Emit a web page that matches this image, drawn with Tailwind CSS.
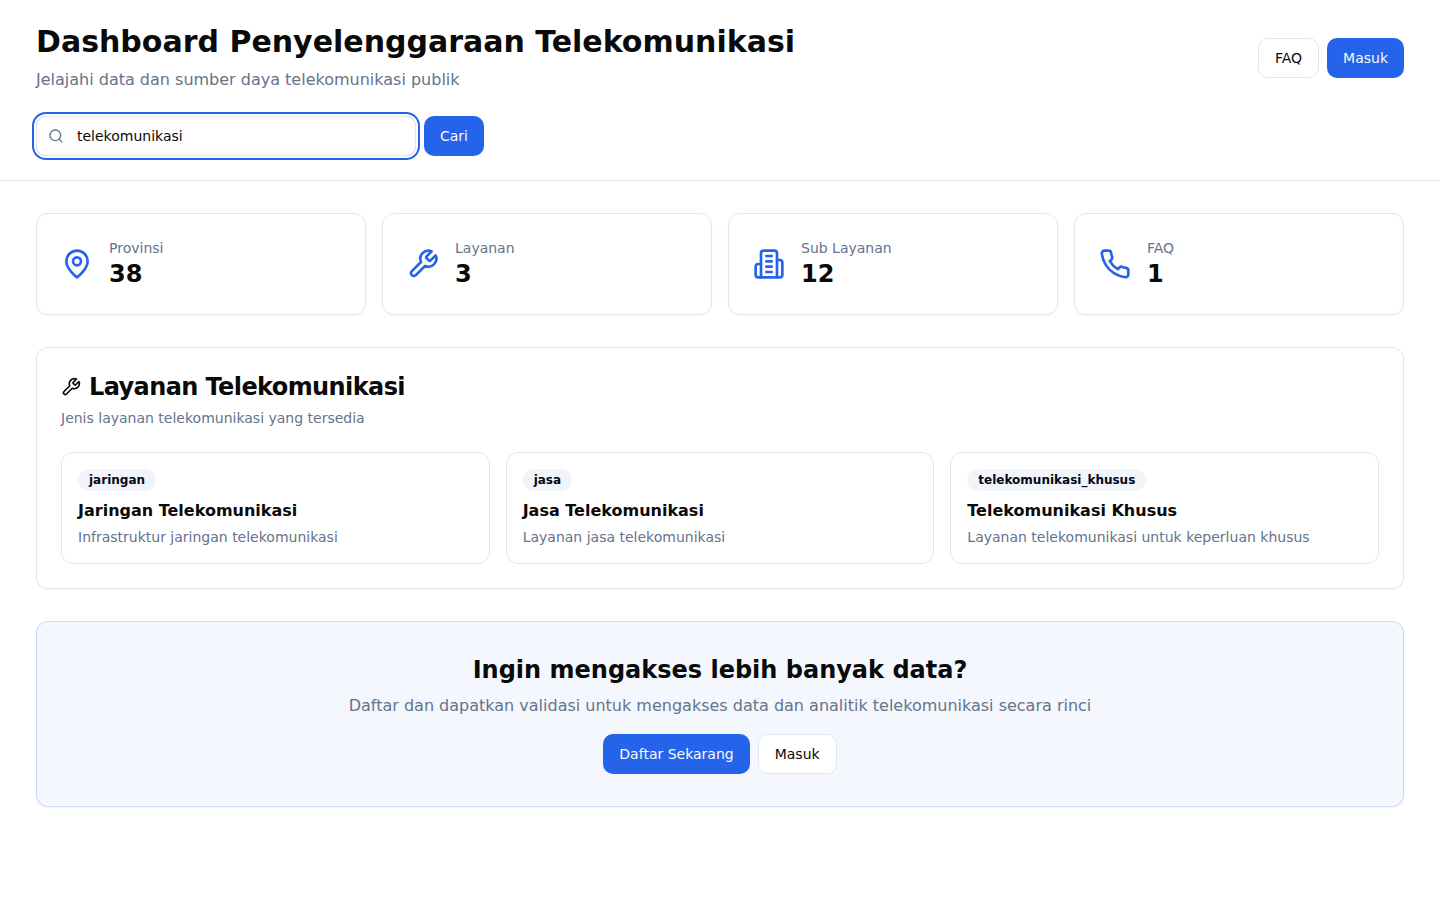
<!DOCTYPE html>
<html lang="id">
    <head>
        <meta charset="utf-8">
        <meta name="viewport" content="width=device-width,initial-scale=1">
        <title>Dashboard Penyelenggaraan Telekomunikasi</title>
        <script src="https://cdn.jsdelivr.net/npm/@tailwindcss/browser@4"></script>
    </head>
    <body class="min-h-screen bg-white text-[#0a0a0a] font-['DejaVu_Sans',sans-serif]">
        <!-- Shared icons -->
        <svg class="hidden">
            <symbol id="wrench" viewBox="0 0 24 24">
                <path d="M14.7 6.3a1 1 0 0 0 0 1.4l1.6 1.6a1 1 0 0 0 1.4 0l3.77-3.77a6 6 0 0 1-7.94 7.94l-6.91 6.91a2.12 2.12 0 0 1-3-3l6.91-6.91a6 6 0 0 1 7.94-7.94l-3.76 3.76z"/>
            </symbol>
        </svg>

        <header class="border-b border-slate-200">
            <div class="max-w-[1400px] mx-auto px-4 py-6">
                <div class="flex items-center justify-between">
                    <div>
                        <h1 class="text-3xl font-bold">Dashboard Penyelenggaraan Telekomunikasi</h1>
                        <p class="mt-2 text-[#64748b]">Jelajahi data dan sumber daya telekomunikasi publik</p>
                    </div>
                    <div class="flex gap-2">
                        <button class="h-10 px-4 rounded-[10px] border border-[#e2e8f0] bg-white text-sm font-medium">FAQ</button>
                        <button class="h-10 px-4 rounded-[10px] bg-[#2563eb] text-[#f8fafc] text-sm font-medium">Masuk</button>
                    </div>
                </div>
                <form class="mt-6 flex gap-2 max-w-md">
                    <div class="relative flex-1">
                        <svg class="absolute left-3 top-3 size-4 text-[#64748b]" viewBox="0 0 24 24" fill="none" stroke="currentColor" stroke-width="2" stroke-linecap="round" stroke-linejoin="round">
                            <circle cx="11" cy="11" r="8"/>
                            <path d="m21 21-4.3-4.3"/>
                        </svg>
                        <input type="text" name="q" value="telekomunikasi" class="block h-10 w-full pl-10 pr-3 py-2 rounded-[10px] border border-[#e2e8f0] text-sm outline-none ring-2 ring-[#2563eb] ring-offset-2 ring-offset-white">
                    </div>
                    <button type="button" class="h-10 px-4 rounded-[10px] bg-[#2563eb] text-[#f8fafc] text-sm font-medium">Cari</button>
                </form>
            </div>
        </header>

        <main class="max-w-[1400px] mx-auto px-4 py-8">
            <!-- Stats -->
            <div class="grid grid-cols-4 gap-4 mb-8">
                <div class="flex items-center gap-4 p-6 rounded-xl border border-[#e2e8f0] bg-white shadow-[0_1px_2px_0_rgb(0_0_0/0.05)]">
                    <svg class="size-8 text-[#2563eb]" viewBox="0 0 24 24" fill="none" stroke="currentColor" stroke-width="2" stroke-linecap="round" stroke-linejoin="round">
                        <path d="M20 10c0 6-8 12-8 12s-8-6-8-12a8 8 0 0 1 16 0Z"/>
                        <circle cx="12" cy="10" r="3"/>
                    </svg>
                    <div>
                        <p class="text-sm text-[#64748b]">Provinsi</p>
                        <p class="text-2xl font-bold">38</p>
                    </div>
                </div>
                <div class="flex items-center gap-4 p-6 rounded-xl border border-[#e2e8f0] bg-white shadow-[0_1px_2px_0_rgb(0_0_0/0.05)]">
                    <svg class="size-8 text-[#2563eb]" fill="none" stroke="currentColor" stroke-width="2" stroke-linecap="round" stroke-linejoin="round"><use href="#wrench"/></svg>
                    <div>
                        <p class="text-sm text-[#64748b]">Layanan</p>
                        <p class="text-2xl font-bold">3</p>
                    </div>
                </div>
                <div class="flex items-center gap-4 p-6 rounded-xl border border-[#e2e8f0] bg-white shadow-[0_1px_2px_0_rgb(0_0_0/0.05)]">
                    <svg class="size-8 text-[#2563eb]" viewBox="0 0 24 24" fill="none" stroke="currentColor" stroke-width="2" stroke-linecap="round" stroke-linejoin="round">
                        <path d="M6 22V4a2 2 0 0 1 2-2h8a2 2 0 0 1 2 2v18Z"/>
                        <path d="M6 12H4a2 2 0 0 0-2 2v6a2 2 0 0 0 2 2h2"/>
                        <path d="M18 9h2a2 2 0 0 1 2 2v9a2 2 0 0 1-2 2h-2"/>
                        <path d="M10 6h4"/>
                        <path d="M10 10h4"/>
                        <path d="M10 14h4"/>
                        <path d="M10 18h4"/>
                    </svg>
                    <div>
                        <p class="text-sm text-[#64748b]">Sub Layanan</p>
                        <p class="text-2xl font-bold">12</p>
                    </div>
                </div>
                <div class="flex items-center gap-4 p-6 rounded-xl border border-[#e2e8f0] bg-white shadow-[0_1px_2px_0_rgb(0_0_0/0.05)]">
                    <svg class="size-8 text-[#2563eb]" viewBox="0 0 24 24" fill="none" stroke="currentColor" stroke-width="2" stroke-linecap="round" stroke-linejoin="round">
                        <path d="M22 16.92v3a2 2 0 0 1-2.18 2 19.79 19.79 0 0 1-8.63-3.07 19.5 19.5 0 0 1-6-6 19.79 19.79 0 0 1-3.07-8.67A2 2 0 0 1 4.11 2h3a2 2 0 0 1 2 1.72 12.84 12.84 0 0 0 .7 2.81 2 2 0 0 1-.45 2.11L8.09 9.91a16 16 0 0 0 6 6l1.27-1.27a2 2 0 0 1 2.11-.45 12.84 12.84 0 0 0 2.81.7A2 2 0 0 1 22 16.92z"/>
                    </svg>
                    <div>
                        <p class="text-sm text-[#64748b]">FAQ</p>
                        <p class="text-2xl font-bold">1</p>
                    </div>
                </div>
            </div>

            <!-- Services -->
            <section class="mb-8 p-6 rounded-xl border border-[#e2e8f0] bg-white shadow-[0_1px_2px_0_rgb(0_0_0/0.05)]">
                <h2 class="flex items-center gap-2 text-2xl leading-tight font-semibold tracking-tight">
                    <svg class="size-5" fill="none" stroke="currentColor" stroke-width="2" stroke-linecap="round" stroke-linejoin="round"><use href="#wrench"/></svg>
                    Layanan Telekomunikasi
                </h2>
                <p class="mt-1.5 text-sm text-[#64748b]">Jenis layanan telekomunikasi yang tersedia</p>
                <div class="mt-6 grid grid-cols-3 gap-4">
                    <div class="p-4 rounded-xl border border-[#e2e8f0]">
                        <div class="w-fit mb-2 px-2.5 py-0.5 rounded-full border border-transparent bg-[#f1f5f9] text-xs font-semibold text-[#020817]">jaringan</div>
                        <h3 class="font-semibold">Jaringan Telekomunikasi</h3>
                        <p class="mt-1 text-sm text-[#64748b]">Infrastruktur jaringan telekomunikasi</p>
                    </div>
                    <div class="p-4 rounded-xl border border-[#e2e8f0]">
                        <div class="w-fit mb-2 px-2.5 py-0.5 rounded-full border border-transparent bg-[#f1f5f9] text-xs font-semibold text-[#020817]">jasa</div>
                        <h3 class="font-semibold">Jasa Telekomunikasi</h3>
                        <p class="mt-1 text-sm text-[#64748b]">Layanan jasa telekomunikasi</p>
                    </div>
                    <div class="p-4 rounded-xl border border-[#e2e8f0]">
                        <div class="w-fit mb-2 px-2.5 py-0.5 rounded-full border border-transparent bg-[#f1f5f9] text-xs font-semibold text-[#020817]">telekomunikasi_khusus</div>
                        <h3 class="font-semibold">Telekomunikasi Khusus</h3>
                        <p class="mt-1 text-sm text-[#64748b]">Layanan telekomunikasi untuk keperluan khusus</p>
                    </div>
                </div>
            </section>

            <!-- Call to action -->
            <section class="p-8 rounded-xl border border-[#2563eb]/20 bg-[#2563eb]/5 text-center shadow-[0_1px_2px_0_rgb(0_0_0/0.05)]">
                <h2 class="mb-2 text-2xl font-bold">Ingin mengakses lebih banyak data?</h2>
                <p class="mb-4 text-[#64748b]">Daftar dan dapatkan validasi untuk mengakses data dan analitik telekomunikasi secara rinci</p>
                <div class="flex justify-center gap-2">
                    <button class="h-10 px-4 rounded-[10px] bg-[#2563eb] text-[#f8fafc] text-sm font-medium">Daftar Sekarang</button>
                    <button class="h-10 px-4 rounded-[10px] border border-[#e2e8f0] bg-white text-sm font-medium">Masuk</button>
                </div>
            </section>
        </main>
    </body>
</html>
